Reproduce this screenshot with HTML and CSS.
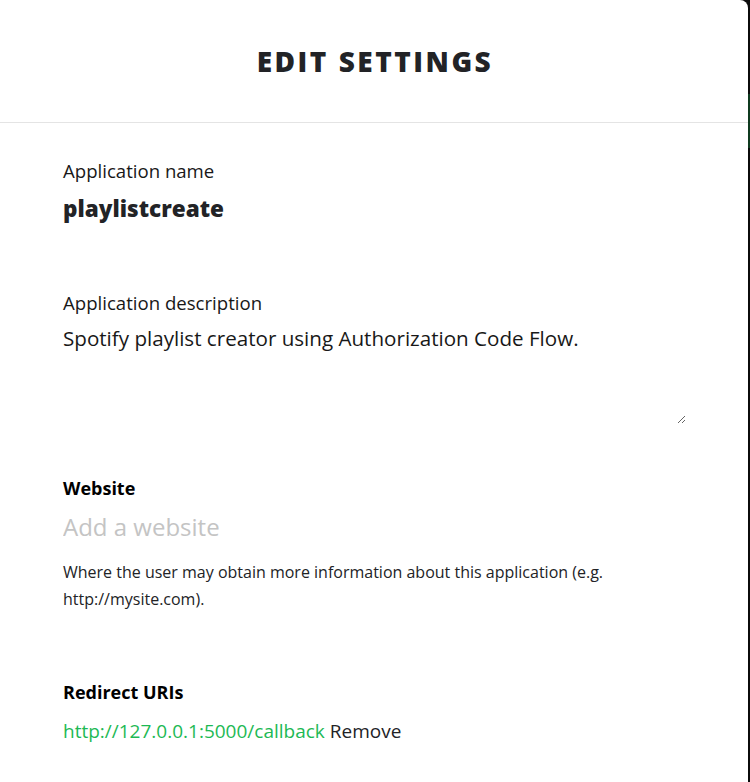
FILE: index.html
```html
<!DOCTYPE html>
<html>
<head>
<meta charset="utf-8">
<link rel="stylesheet" href="styles.css">
</head>
<body>
<div class="page">
  <div class="modal">
    <div class="modal-header">
      <h1 class="title">EDIT SETTINGS</h1>
    </div>
    <div class="modal-body">
      <div class="field field-name">
        <div class="label">Application name</div>
        <div class="value-name">playlistcreate</div>
      </div>
      <div class="field field-desc">
        <div class="label">Application description</div>
        <textarea class="desc">Spotify playlist creator using Authorization Code Flow.</textarea>
      </div>
      <div class="field field-web">
        <div class="label-bold">Website</div>
        <input class="web-input" type="text" placeholder="Add a website">
        <p class="help">Where the user may obtain more information about this application (e.g. http://mysite.com).</p>
      </div>
      <div class="field field-redirect">
        <div class="label-bold">Redirect URIs</div>
        <div class="uri-row"><span class="uri">http://127.0.0.1:5000/callback</span> <span class="remove">Remove</span></div>
      </div>
    </div>
  </div>
  <div class="edge"><span class="edge-green"></span></div>
</div>
</body>
</html>
```
FILE: styles.css
```css
html, body {
  margin: 0;
  padding: 0;
  background: #0b0b0b;
}
.page {
  display: flex;
  width: 750px;
  height: 782px;
  overflow: hidden;
}
.modal {
  width: 748px;
  flex: none;
  background: #fff;
  border-top-right-radius: 8px;
  font-family: "Open Sans", "Noto Sans", sans-serif;
  color: #181818;
}
.edge {
  flex: 1;
  background: #0b0b0b;
  display: flex;
  flex-direction: column;
}
.edge-green {
  display: block;
  margin-top: 94px;
  height: 54px;
  background: #0f3a1f;
}
.modal-header {
  height: 123px;
  border-bottom: 1px solid #e4e4e4;
  display: flex;
  align-items: center;
  justify-content: center;
  box-sizing: border-box;
}
.title {
  margin: 0 0 0 2px;
  font-size: 28px;
  font-weight: 800;
  letter-spacing: 2.5px;
  color: #222326;
}
.modal-body {
  padding: 36px 62px 0 63px;
}
.label {
  font-size: 18.6px;
  line-height: 24px;
  color: #181818;
}
.value-name {
  font-size: 22.5px;
  font-weight: 800;
  margin-top: 12px;
  line-height: 28px;
  color: #222326;
}
.field-desc {
  margin-top: 68px;
}
.desc {
  display: block;
  width: 623px;
  height: 100px;
  margin-top: 9px;
  padding: 0;
  border: none;
  outline: none;
  resize: vertical;
  font-family: inherit;
  font-size: 20.6px;
  line-height: 28px;
  color: #181818;
  box-sizing: border-box;
}
.field-web {
  margin-top: 52px;
}
.label-bold {
  font-size: 18px;
  font-weight: 700;
  line-height: 24px;
  color: #000;
}
.web-input {
  display: block;
  width: 623px;
  margin-top: 12px;
  padding: 0;
  border: none;
  outline: none;
  font-family: inherit;
  font-size: 24px;
  line-height: 30px;
  color: #181818;
}
.web-input::placeholder {
  color: #c4c4c4;
}
.help {
  margin: 17px 0 0;
  font-size: 16px;
  line-height: 27px;
  color: #222326;
  max-width: 560px;
}
.field-redirect {
  margin-top: 67px;
}
.uri-row {
  margin-top: 14px;
  font-size: 19px;
  line-height: 26px;
}
.uri {
  color: #1db954;
}
.remove {
  color: #222326;
}
```
